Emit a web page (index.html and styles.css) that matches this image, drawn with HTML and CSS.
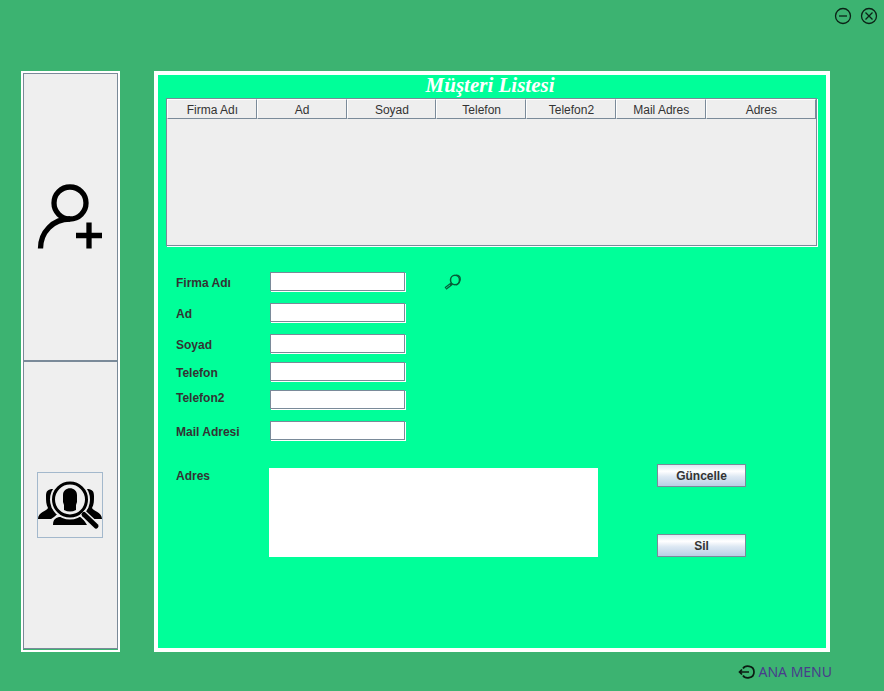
FILE: index.html
```html
<!DOCTYPE html>
<html lang="tr">
<head>
<meta charset="utf-8">
<title>Müşteri Listesi</title>
<link rel="stylesheet" href="styles.css">
</head>
<body>
<header class="window-bar">
  <button class="icon-button" type="button" aria-label="Küçült">
    <svg width="18" height="18" viewBox="0 0 18 18" fill="none" stroke="#0b2216" stroke-width="1.3"><circle cx="9" cy="9" r="7.5"/><path d="M5 9h8"/></svg>
  </button>
  <button class="icon-button" type="button" aria-label="Kapat">
    <svg width="18" height="18" viewBox="0 0 18 18" fill="none" stroke="#0b2216" stroke-width="1.3"><circle cx="9" cy="9" r="7.5"/><path d="M5.5 5.5l7 7M12.5 5.5l-7 7"/></svg>
  </button>
</header>
<div class="workspace">
  <nav class="sidebar">
    <button class="side-button" type="button" aria-label="Müşteri ekle">
      <svg width="66" height="66" viewBox="0 0 66 66" fill="none" stroke="#000" stroke-width="5.300"><circle cx="33" cy="19" r="16"/><path d="M3.500 64.500C3.500 48 16 35 33 35M39 51.500h26M52 38.500v26"/></svg>
    </button>
    <button class="side-button" type="button" aria-label="Müşteri ara">
      <svg class="focused" width="66" height="66" viewBox="0 0 66 66">
        <path d="M16 17c-5 0-7 2-7 7 0 5 0 8 2 12-1 3-10 4-10 11h13l9-6V17zM50 17c5 0 7 2 7 7 0 5 0 8-2 12 1 3 10 4 10 11H52l-9-6V17z"/>
        <path d="M14 47h2c2-3 4-5 6-6h23l9 13H14z" fill="#eee"/>
        <path d="M16 53c0-5 2-7 6-8h23l5 8z"/>
        <circle cx="33" cy="27.500" r="20" fill="#eee"/>
        <circle cx="33" cy="27.500" r="16.500" fill="#eee" stroke="#000" stroke-width="3"/>
        <path d="M26 23c0-9 14-9 14 0v7l-1 3v5q-6 3-12 0v-5l-1-3z"/>
        <path d="M45 41l15 14" stroke="#eee" stroke-width="8"/>
        <path d="M47 42.500L59 54" stroke="#000" stroke-width="5" stroke-linecap="round"/>
      </svg>
    </button>
  </nav>
  <main class="panel">
    <h1 class="title">Müşteri Listesi</h1>
    <div class="table-frame">
      <table class="customers">
        <thead><tr><th>Firma Adı</th><th>Ad</th><th>Soyad</th><th>Telefon</th><th>Telefon2</th><th>Mail Adres</th><th class="last">Adres</th></tr></thead>
      </table>
    </div>
    <form class="form">
      <div class="fields">
        <div class="row">
          <label for="firma">Firma Adı</label><input id="firma" type="text">
          <button class="icon-button search" type="button" aria-label="Ara">
            <svg width="18" height="16" viewBox="0 0 18 16" fill="none" stroke="#075c38"><ellipse cx="11" cy="6" rx="4.5" ry="4.700" stroke-width="1.500"/><path d="M12 1.200c3 0 4.300 1 4.300 4-.3 3-2 5-4 6" stroke-width="1.200"/><path d="M8 9.500l-6.500 5" stroke-width="3"/><path d="M6 11l-4 3" stroke="#00d987" stroke-width="1"/></svg>
          </button>
        </div>
        <div class="row"><label for="ad">Ad</label><input id="ad" type="text"></div>
        <div class="tight">
          <div class="row"><label for="soyad">Soyad</label><input id="soyad" type="text"></div>
          <div class="row"><label for="telefon">Telefon</label><input id="telefon" type="text"></div>
          <div class="row raised"><label for="telefon2">Telefon2</label><input id="telefon2" type="text"></div>
        </div>
        <div class="row"><label for="mail">Mail Adresi</label><input id="mail" type="text"></div>
      </div>
      <div class="address">
        <label for="adres">Adres</label><textarea id="adres"></textarea>
        <div class="actions">
          <button class="action" type="button">Güncelle</button>
          <button class="action" type="button">Sil</button>
        </div>
      </div>
    </form>
  </main>
</div>
<footer class="footer">
  <a class="menu-link" href="#">
    <svg width="17" height="14" viewBox="0 0 17 14" fill="none" stroke="#0b1b12" stroke-width="1.700"><path d="M5 3.500C7 0 16 0 16 7S7 14 5 10.500M1 7h10M4 4.500L1.500 7 4 9.500"/></svg>
    ANA MENU
  </a>
</footer>
</body>
</html>
```

FILE: styles.css
```css
* {
  box-sizing: border-box;
}

body {
  display: flex;
  flex-direction: column;
  min-height: 100vh;
  margin: 0;
  background: #3cb371;
  color: #333;
  font: 12px/16px "Liberation Sans", Arial, sans-serif;
}

button {
  padding: 0;
  font: inherit;
  color: inherit;
}

svg {
  display: block;
}

.window-bar {
  display: flex;
  justify-content: flex-end;
  gap: 8px;
  height: 71px;
  padding: 7px 6px;
}

.icon-button {
  align-self: flex-start;
  border: 0;
  background: none;
}

.workspace {
  flex: 1;
  display: flex;
  gap: 34px;
  padding: 0 54px 0 21px;
}

.sidebar {
  display: flex;
  flex-direction: column;
  flex: 0 0 99px;
  padding-bottom: 1px;
  border: 2px solid #fff;
}

.side-button {
  flex: 1;
  display: grid;
  place-items: center;
  padding-right: 1px;
  border: 1px solid #7a8a99;
  background: #efefef;
}

.focused {
  outline: 1px solid #a3b8cc;
  outline-offset: -1px;
}

.panel {
  flex: 1;
  padding: 0 8px;
  border: 4px solid #fff;
  background: #00ff99;
}

.title {
  height: 23px;
  margin: 0;
  padding-right: 4px;
  color: #fff;
  font: italic bold 21px/20px "Liberation Serif", serif;
  text-align: center;
}

.table-frame {
  height: 148px;
  margin-right: 1px;
  border: 1px solid #7a8a99;
  background: #eee;
  box-shadow: 1px 1px 0 #fff;
}

.customers {
  width: 100%;
  border-collapse: separate;
  border-spacing: 0;
  table-layout: fixed;
}

.customers th {
  height: 20px;
  padding: 1px 0 0 1px;
  border: 1px solid #7a8a99;
  border-top-color: #fff;
  border-left-color: #fff;
  font-weight: normal;
  line-height: 16px;
}

.customers .last {
  width: 17%;
}

.form {
  padding: 26px 0 0 10px;
  font-weight: bold;
}

.fields {
  display: grid;
  gap: 12px;
}

.tight {
  display: grid;
  gap: 9px;
}

.row {
  display: flex;
  align-items: center;
  height: 19px;
}

.row label,
.address label {
  flex: 0 0 94px;
  padding-top: 2px;
}

.raised label {
  padding: 0 0 4px;
}

.row input {
  width: 135px;
  height: 19px;
  padding: 0 3px;
  border: 1px solid #7a8a99;
  background: #fff;
  box-shadow: 1px 1px 0 #fff;
  font: inherit;
}

.search {
  align-self: center;
  margin-left: 39px;
}

.address {
  display: flex;
  align-items: flex-start;
  margin-top: 24px;
}

.address label {
  flex-basis: 93px;
  padding-top: 4px;
}

.address textarea {
  flex: 0 1 329px;
  height: 89px;
  margin-top: 4px;
  border: 0;
  background: #fff;
  resize: none;
}

.actions {
  display: grid;
  gap: 47px;
  margin-left: 59px;
}

.action {
  width: 89px;
  height: 23px;
  border: 1px solid #7a8a99;
  background: linear-gradient(#dde8f3, #fff 30%, #dde8f3 55%, #b8cfe5);
}

.footer {
  display: flex;
  justify-content: flex-end;
  height: 39px;
  padding: 10px 52px 0 0;
}

.menu-link {
  display: flex;
  align-items: center;
  gap: 3px;
  height: 20px;
  color: #483d8b;
  font: 14px/20px "Noto Sans", sans-serif;
  text-decoration: none;
}
```
